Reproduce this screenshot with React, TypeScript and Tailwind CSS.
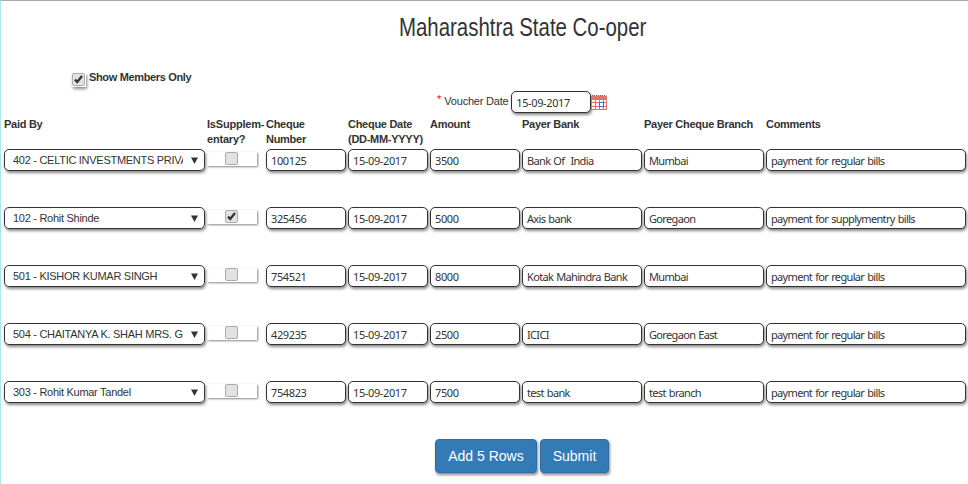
import type { ReactNode } from "react";

const rows = [
  ["402 - CELTIC INVESTMENTS PRIVA", false, "100125", "15-09-2017", "3500", "Bank Of  India", "Mumbai", "payment for regular bills"],
  ["102 - Rohit Shinde", true, "325456", "15-09-2017", "5000", "Axis bank", "Goregaon", "payment for supplymentry bills"],
  ["501 - KISHOR KUMAR SINGH", false, "754521", "15-09-2017", "8000", "Kotak Mahindra Bank", "Mumbai", "payment for regular bills"],
  ["504 - CHAITANYA K. SHAH MRS. G", false, "429235", "15-09-2017", "2500", "ICICI", "Goregaon East", "payment for regular bills"],
  ["303 - Rohit Kumar Tandel", false, "754823", "15-09-2017", "7500", "test bank", "test branch", "payment for regular bills"],
] as [string, boolean, ...string[]][];

const cols = "grid grid-cols-[201px_57px_80px_80px_90px_120px_120px_200px] gap-x-[2px]";

function Field({ children, numeric }: { children: ReactNode; numeric?: boolean }) {
  return (
    <div
      className={
        "h-[22px] rounded-[5px] border border-[#333] bg-white pl-1 pt-[2px] font-['Noto_Sans',sans-serif] text-[11px] leading-[18px] whitespace-pre shadow-[1px_2px_3px_#888] " +
        (numeric ? "tracking-[-0.38px]" : "tracking-[-0.66px] [word-spacing:0.8px]")
      }
    >
      {children}
    </div>
  );
}

function Check({ on }: { on: boolean }) {
  return (
    <svg className="block h-[13px] w-[13px] shrink-0" viewBox="0 0 13 13">
      <rect x="0.5" y="0.5" width="12" height="12" rx="1.5" fill="#e2e2e2" stroke="#ababab" />
      {on && <path d="M3 6.6 5.2 9 10 3" fill="none" stroke="#333" strokeWidth="2.4" />}
    </svg>
  );
}

function Calendar() {
  return (
    <svg className="mt-1 block h-[15px] w-4" viewBox="0 0 16 15" shapeRendering="crispEdges">
      <rect width="16" height="15" fill="#d8766c" />
      <path d="M0 0h16v1H0z" fill="#f0d0cc" />
      <path d="M1 0h1v1H1zM3 0h1v1H3zM5 0h1v1H5zM7 0h1v1H7zM9 0h1v1H9zM11 0h1v1h-1zM13 0h1v1h-1z" fill="#8a5a56" />
      <path d="M1 5h3v2H1zM5 5h3v2H5zM9 5h3v2H9zM13 5h2v2h-2zM1 8h3v3H1zM5 8h3v3H5zM9 8h3v3H9zM13 8h2v3h-2zM1 12h3v2H1zM5 12h3v2H5zM9 12h3v2H9zM13 12h2v2h-2z" fill="#fff5f3" />
      <rect x="8" y="7" width="5" height="5" fill="#3a6fe0" />
      <rect x="9" y="8" width="3" height="3" fill="#fff" />
    </svg>
  );
}

export default function App() {
  return (
    <div className="h-[484px] w-[968px] overflow-hidden border-t border-l border-t-[#aaa] border-l-[#b2e6ee] bg-white font-['Liberation_Sans',Arial,sans-serif] text-[11px] text-[#333]">
      <h1 className="ml-[398px] mt-[9px] h-[34px] w-[320px] origin-left scale-x-[0.785] text-[26px] leading-[34px] whitespace-nowrap">Maharashtra State Co-oper</h1>
      <div className="ml-[71px] mt-[25px] flex h-[22px] font-bold tracking-[-0.35px]">
        <div className="mt-[4px] h-[14px] w-[14px] shadow-[1px_2px_3px_#888]"><Check on /></div>
        <span className="ml-[3px] pt-px leading-[15px]">Show Members Only</span>
      </div>
      <div className="ml-[436px] flex h-[25px]">
        <span className="text-[#f00]">*</span>
        <span className="ml-[3px] w-[67px] pt-[3px] leading-[15px] tracking-[-0.2px] whitespace-nowrap">Voucher Date</span>
        <div className="w-20"><Field numeric>15-09-2017</Field></div>
        <Calendar />
      </div>
      <div className={"ml-[3px] h-[33px] pt-px font-bold leading-[15px] tracking-[-0.28px] whitespace-nowrap " + cols}>
        <span>Paid By</span>
        <span className="tracking-[-0.2px]">IsSupplem-<br />entary?</span>
        <span>Cheque<br />Number</span>
        <span>Cheque Date<br />(DD-MM-YYYY)</span>
        <span>Amount</span>
        <span>Payer Bank</span>
        <span>Payer Cheque Branch</span>
        <span>Comments</span>
      </div>
      <div className="ml-[3px] flex flex-col gap-9">
        {rows.map(([name, on, ...vals]) => (
          <div key={name} className={"h-[22px] " + cols}>
            <div className="flex h-[22px] items-center rounded-[5px] border border-[#333] pl-2 shadow-[1px_2px_3px_#888]">
              <span className="w-[170px] overflow-hidden tracking-[-0.28px] whitespace-nowrap">{name}</span>
              <svg className="ml-[8px] h-[7px] w-[7px]" viewBox="0 0 7 7"><path d="M0 0.5h7L3.5 7z" fill="#333" /></svg>
            </div>
            <div className="mt-[3px] flex h-[14px] w-[50px] justify-center shadow-[1px_1px_2px_#888]"><div className="mr-[2px]"><Check on={on} /></div></div>
            {vals.map((v, i) => <Field key={i} numeric={i < 3}>{v}</Field>)}
          </div>
        ))}
      </div>
      <div className="ml-[434px] mt-[36px] flex gap-[3px] text-[14px] text-white">
        <button className="h-[34px] w-[102px] rounded-[4px] border border-[#2e6da4] bg-[#337ab7] shadow-[1px_2px_3px_#888]">Add 5 Rows</button>
        <button className="h-[34px] w-[69px] rounded-[4px] border border-[#2e6da4] bg-[#337ab7] shadow-[1px_2px_3px_#888]">Submit</button>
      </div>
    </div>
  );
}
